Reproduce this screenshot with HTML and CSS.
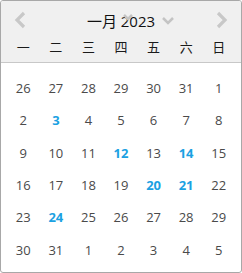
FILE: index.html
```html
<!DOCTYPE html>
<html lang="zh">
<head>
    <meta charset="UTF-8">
    <title>Calendar</title>
    <link rel="stylesheet" href="styles.css">
</head>
<body>
    <div class="calendar">
        <div class="cal-header">
            <div class="nav">
                <span class="arrow">
                    <svg width="12" height="18" viewBox="0 0 12 18"><path d="M10 2 L3 9 L10 16" fill="none" stroke="#c8c8c8" stroke-width="3.2"/></svg>
                </span>
                <span class="title">
                    一月 2023
                    <svg class="drop drop-month" width="10" height="7" viewBox="0 0 10 7"><path d="M1 1 L5 5 L9 1" fill="none" stroke="#c4c4c4" stroke-width="2.5"/></svg>
                    <svg class="drop drop-year" width="12" height="8" viewBox="0 0 12 8"><path d="M1 1 L6 6 L11 1" fill="none" stroke="#c4c4c4" stroke-width="2.5"/></svg>
                </span>
                <span class="arrow">
                    <svg width="12" height="18" viewBox="0 0 12 18"><path d="M2 2 L9 9 L2 16" fill="none" stroke="#c8c8c8" stroke-width="3.2"/></svg>
                </span>
            </div>
            <div class="weekdays">
                <span>一</span><span>二</span><span>三</span><span>四</span><span>五</span><span>六</span><span>日</span>
            </div>
        </div>
        <div class="days">
            <span>26</span><span>27</span><span>28</span><span>29</span><span>30</span><span>31</span><span>1</span>
            <span>2</span><span class="mark">3</span><span>4</span><span>5</span><span>6</span><span>7</span><span>8</span>
            <span>9</span><span>10</span><span>11</span><span class="mark">12</span><span>13</span><span class="mark">14</span><span>15</span>
            <span>16</span><span>17</span><span>18</span><span>19</span><span class="mark">20</span><span class="mark">21</span><span>22</span>
            <span>23</span><span class="mark">24</span><span>25</span><span>26</span><span>27</span><span>28</span><span>29</span>
            <span>30</span><span>31</span><span>1</span><span>2</span><span>3</span><span>4</span><span>5</span>
        </div>
    </div>
</body>
</html>
```

FILE: styles.css
```css
body {
    margin: 0;
    font-family: "Open Sans", "Noto Sans CJK SC", sans-serif;
}
.calendar {
    width: 242px;
    height: 273px;
    box-sizing: border-box;
    border: 1px solid #a8a8a8;
    border-radius: 3px;
    background: #fff;
    overflow: hidden;
}
.cal-header {
    background: #f0f0f0;
    height: 61px;
    border-bottom: 1px solid #c8c8c8;
}
.nav {
    display: flex;
    align-items: center;
    height: 36px;
}
.arrow {
    width: 38px;
    display: flex;
    justify-content: center;
    padding-top: 2px;
}
.title {
    flex: 1;
    text-align: center;
    position: relative;
    font-size: 15px;
    color: #111;
    padding-top: 2px;
}
.drop {
    position: absolute;
}
.drop-month {
    left: 84px;
    top: 6px;
}
.drop-year {
    left: 123px;
    top: 9px;
}
.weekdays {
    display: grid;
    grid-template-columns: repeat(7, 1fr);
    padding: 0 6px;
    font-family: "Noto Sans CJK SC", sans-serif;
    font-size: 13px;
    color: #1a1a1a;
    text-align: center;
    line-height: 20px;
}
.days {
    display: grid;
    grid-template-columns: repeat(7, 1fr);
    grid-auto-rows: 32.3px;
    align-items: center;
    padding: 9px 6px 0;
    font-size: 13px;
    color: #4a4a4a;
    text-align: center;
}
.mark {
    color: #1ba1e2;
    font-weight: bold;
}
```
